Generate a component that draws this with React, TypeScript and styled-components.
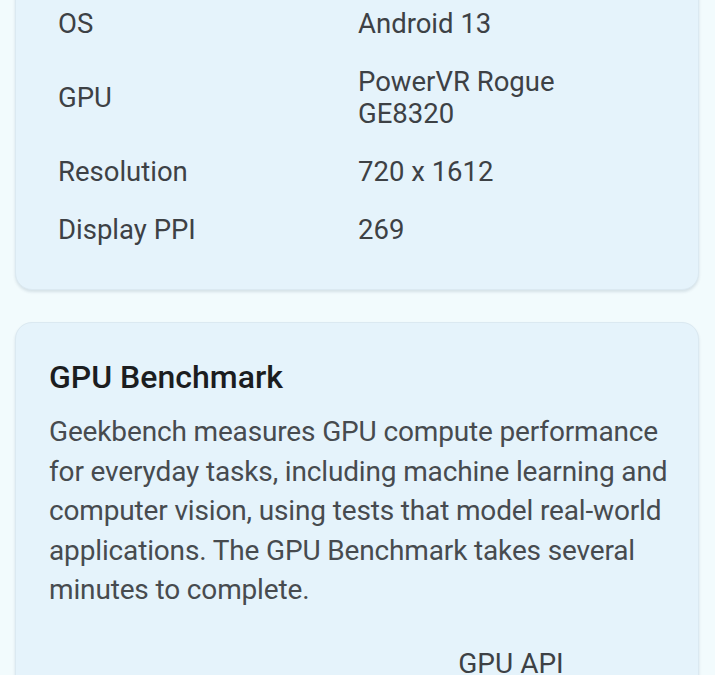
import React from 'react';
import styled, { createGlobalStyle } from 'styled-components';

type InfoRow = {
  label: string;
  value: string[];
};

const rows: InfoRow[] = [
  { label: 'OS', value: ['Android 13'] },
  { label: 'GPU', value: ['PowerVR Rogue', 'GE8320'] },
  { label: 'Resolution', value: ['720 x 1612'] },
  { label: 'Display PPI', value: ['269'] },
];

// wrapped as the device wraps it
const description = [
  'Geekbench measures GPU compute performance',
  'for everyday tasks, including machine learning and',
  'computer vision, using tests that model real-world',
  'applications. The GPU Benchmark takes several',
  'minutes to complete.',
];

const App = () => (
  <Page>
    <GlobalStyle />
    <Scroller>
      <Card>
        <InfoTable>
          {rows.map((row) => (
            <Row key={row.label}>
              <Label>{row.label}</Label>
              <Value>
                {row.value.map((line) => (
                  <div key={line}>{line}</div>
                ))}
              </Value>
            </Row>
          ))}
        </InfoTable>
      </Card>

      <BenchCard>
        <Title>GPU Benchmark</Title>
        <Description>
          {description.map((line) => (
            <Line key={line}>{line}</Line>
          ))}
        </Description>
        <Options>
          <OptionCol />
          <OptionCol>
            <OptionLabel>GPU API</OptionLabel>
          </OptionCol>
        </Options>
      </BenchCard>
    </Scroller>
  </Page>
);

const GlobalStyle = createGlobalStyle`
  html, body {
    margin: 0;
    padding: 0;
    background: #f2fbfd;
    font-family: Roboto, "Noto Sans", sans-serif;
    overflow: hidden;
  }
`;

const Page = styled.div`
  width: 715px;
  height: 675px;
  overflow: hidden;
  background: #f2fbfd;
`;

// the list is scrolled, so the first card starts above the window
const Scroller = styled.div`
  margin-top: -28px;
  padding: 0 16px 0 15px;
  display: flex;
  flex-direction: column;
  gap: 32px;
`;

const Card = styled.div`
  background: #e5f3fb;
  border-radius: 17px;
  border: 1px solid #dbe9f1;
  box-shadow: 0 2px 3px rgba(0, 40, 70, 0.12);
`;

const InfoTable = styled.div`
  padding: 22px 0 30px 42px;
  display: flex;
  flex-direction: column;
`;

const Row = styled.div`
  display: flex;
  align-items: center;
  padding: 13px 0;
  font-size: 27.5px;
  line-height: 32px;
  color: #3d4145;
`;

const Label = styled.div`
  width: 300px;
`;

const Value = styled.div`
  flex: 1;
`;

const BenchCard = styled(Card)`
  padding: 36px 33px 40px;
  border-bottom-left-radius: 0;
  border-bottom-right-radius: 0;
`;

const Title = styled.h2`
  margin: 0;
  font-size: 32px;
  font-weight: 500;
  line-height: 36px;
  color: #1b1d1f;
`;

const Description = styled.div`
  margin: 17px 0 0;
  font-size: 28px;
  line-height: 39.5px;
  letter-spacing: -0.15px;
  color: #474b4f;
`;

const Line = styled.div`
  white-space: nowrap;
`;

const Options = styled.div`
  margin-top: 38px;
  display: grid;
  grid-template-columns: 1fr 1fr;
`;

const OptionCol = styled.div`
  display: flex;
  justify-content: center;
`;

const OptionLabel = styled.div`
  font-size: 28px;
  line-height: 32px;
  color: #3d4145;
`;

export default App;
